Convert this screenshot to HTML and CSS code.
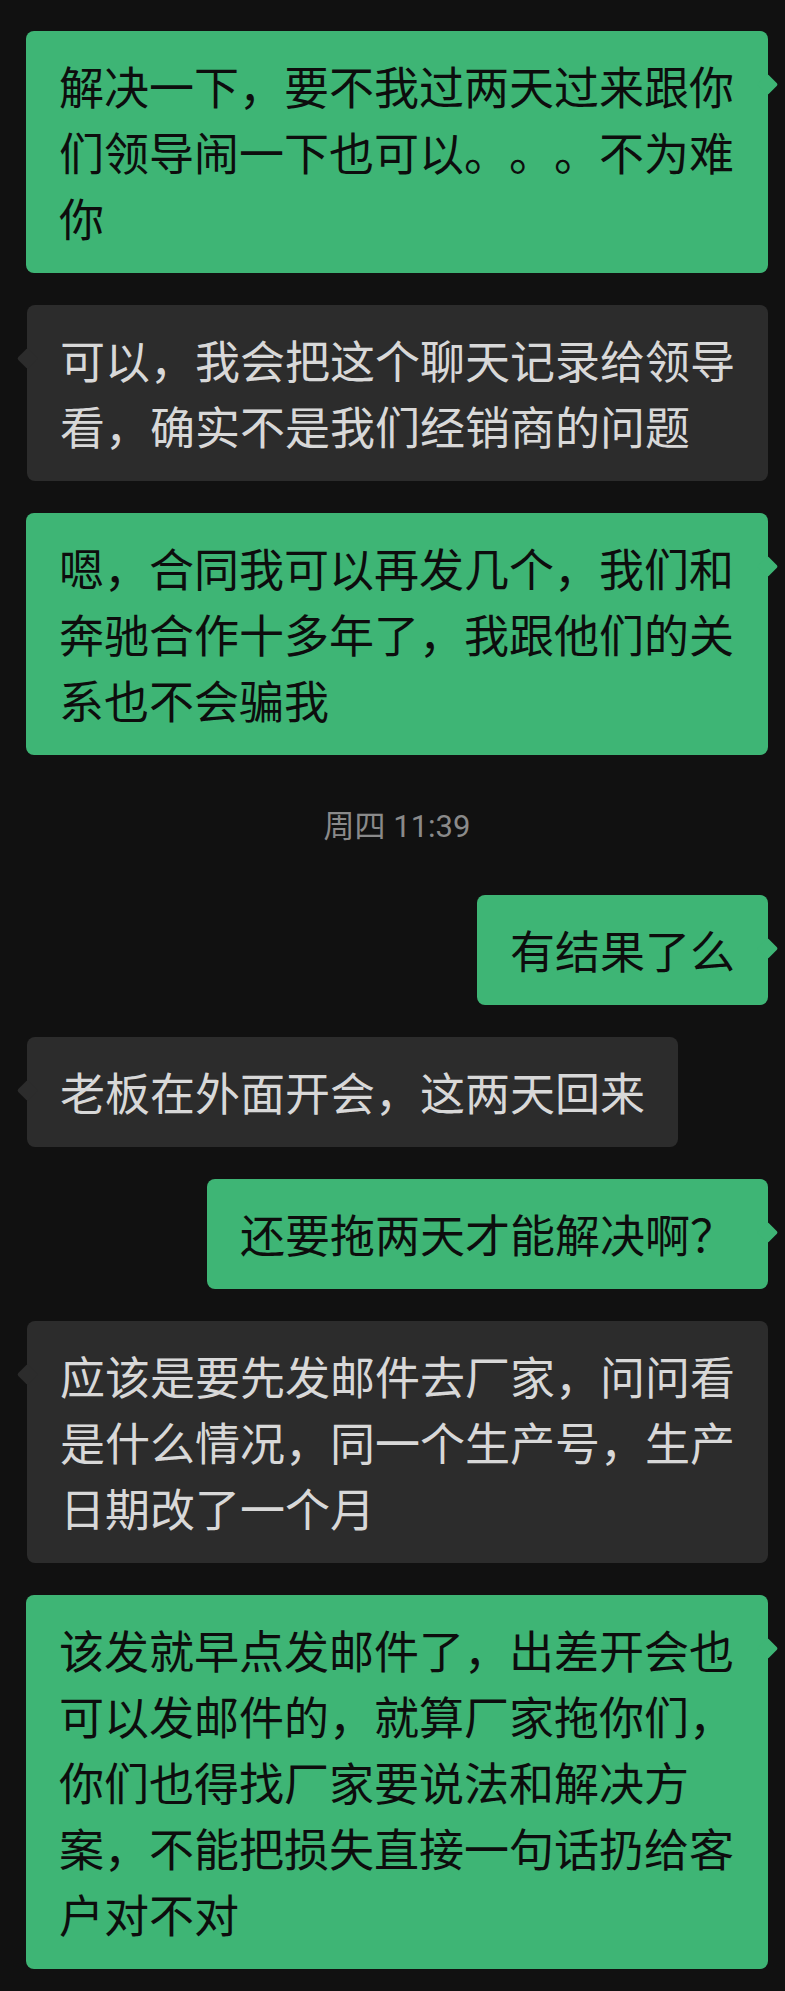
FILE: index.html
```html
<!DOCTYPE html>
<html lang="zh-CN">
<head>
<meta charset="utf-8">
<title>聊天记录</title>
<link rel="stylesheet" href="styles.css">
</head>
<body>
<div class="chat">
  <div class="row sent"><div class="bubble">解决一下，要不我过两天过来跟你们领导闹一下也可以。。。不为难你</div></div>
  <div class="row recv"><div class="bubble">可以，我会把这个聊天记录给领导看，确实不是我们经销商的问题</div></div>
  <div class="row sent"><div class="bubble">嗯，合同我可以再发几个，我们和奔驰合作十多年了，我跟他们的关系也不会骗我</div></div>
  <div class="time">周四 11:39</div>
  <div class="row sent"><div class="bubble">有结果了么</div></div>
  <div class="row recv"><div class="bubble">老板在外面开会，这两天回来</div></div>
  <div class="row sent"><div class="bubble">还要拖两天才能解决啊？</div></div>
  <div class="row recv"><div class="bubble">应该是要先发邮件去厂家，问问看是什么情况，同一个生产号，生产日期改了一个月</div></div>
  <div class="row sent"><div class="bubble">该发就早点发邮件了，出差开会也可以发邮件的，就算厂家拖你们，你们也得找厂家要说法和解决方案，不能把损失直接一句话扔给客户对不对</div></div>
</div>
</body>
</html>
```

FILE: styles.css
```css
html, body {
  margin: 0;
  padding: 0;
  background: #111111;
}

body {
  font-family: "Noto Sans CJK SC", "Noto Sans", sans-serif;
}

.chat {
  display: flex;
  flex-direction: column;
  gap: 32px;
  padding: 31px 17px 22px 26px;
}

.row {
  display: flex;
}

.sent {
  justify-content: flex-end;
}

.recv {
  justify-content: flex-start;
  padding-left: 1px;
}

.bubble {
  position: relative;
  max-width: 676px;
  padding: 22px 33px;
  font-size: 45px;
  line-height: 66px;
  border-radius: 8px;
  text-spacing-trim: space-all;
}

.bubble::after {
  content: "";
  position: absolute;
  top: 46px;
  width: 15px;
  height: 15px;
  border-radius: 2px;
  background: inherit;
  transform: rotate(45deg);
}

.sent .bubble {
  background: #3eb575;
  color: #0d0d0d;
}

.sent .bubble::after {
  right: -7px;
}

.recv .bubble {
  background: #2c2c2c;
  color: #d8d8d8;
}

.recv .bubble::after {
  left: -7px;
}

.time {
  text-align: center;
  font-family: Roboto, "Noto Sans CJK SC", sans-serif;
  font-size: 31px;
  line-height: 40px;
  color: #8a8a8a;
  padding: 20px 0 16px;
}
```
